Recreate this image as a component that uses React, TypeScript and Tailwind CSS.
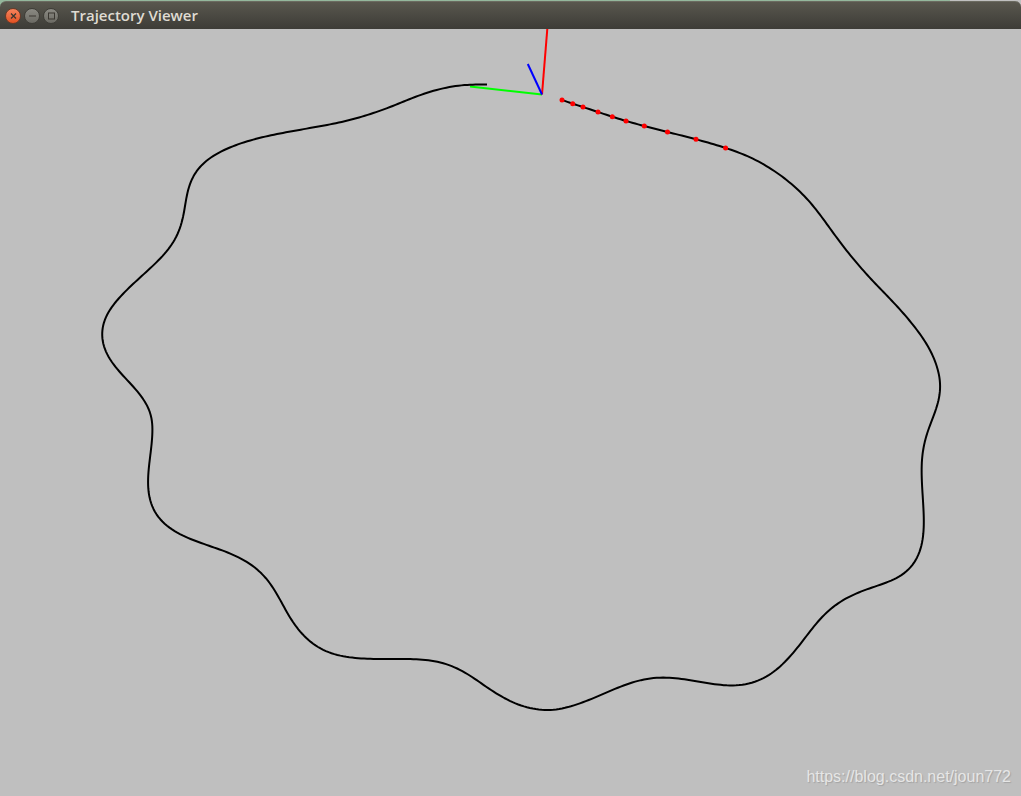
import type { ReactNode } from "react";

type Point = [number, number];

const SAMPLES: Point[] = [
  [562, 100], [572.7, 103.7], [583, 107], [598, 112], [612.3, 116.7], [626, 121], [644.3, 126], [667.5, 132],
  [696, 139.3], [725.6, 148], [750, 157.3], [771.7, 169.3], [789, 182], [808.3, 200.3], [821.7, 217],
  [833.3, 233], [846.7, 250.7], [860, 266.7], [873.3, 281.5], [890, 298.8], [903.3, 313.3], [916.7, 329.7],
  [927.7, 346], [935, 361.3], [939, 375], [940.2, 386], [938.7, 400], [934, 414.7], [928, 430.5], [924, 445],
  [921.9, 460], [921.8, 478.3], [923, 501.7], [923.8, 521], [922.5, 540], [917.3, 557.3], [908.3, 570],
  [888.3, 581.7], [866.7, 589.3], [848.3, 597.3], [833.3, 606.7], [820, 619.3], [806.7, 635.7],
  [793.3, 652.7], [780, 666.5], [766.7, 676.3], [751.7, 683], [732.7, 685.5], [711.7, 683.7], [690, 680.2],
  [670, 677.8], [660, 677.4], [646.7, 679], [626.7, 684.3], [603.3, 694], [580, 703.3], [561.7, 708.6],
  [545, 710], [526.7, 707.2], [510, 701], [493.3, 691.5], [476.7, 680.2], [460, 669.8], [443.3, 663.2],
  [428.3, 660.2], [413.3, 659.2], [380, 659], [366.7, 658.7], [346.7, 656.8], [328.3, 652.2], [313.3, 643.9],
  [300, 631.4], [290, 617.4], [280, 599.7], [271.7, 585.7], [261.7, 573.5], [246.7, 561.8], [230, 553.5],
  [211.7, 546.7], [193.3, 540], [175, 531.3], [160, 519.3], [151, 503.3], [148.1, 485], [149, 466.7],
  [151.3, 446.7], [152.3, 431.7], [151, 415], [145, 401.7], [135, 388.7], [123.3, 375.9], [111.7, 361.9],
  [105.7, 351.4], [102.8, 341], [102.2, 333.3], [104.6, 320], [111.7, 307.3], [125, 291.9], [141.7, 276],
  [158.3, 260.4], [171.7, 244.6], [180, 228.5], [184.3, 210.5], [187.3, 193.3], [192, 178.6], [200, 167],
  [213.3, 155.9], [230, 147.5], [253.3, 139.6], [280, 133.5], [306.7, 128.6], [330, 124.4], [353.3, 119.1],
  [373.3, 113], [390, 107.1], [412, 98.2], [430, 91.8], [440, 89], [453, 86.4], [467, 84.9], [487, 84.6],
];

const KEYFRAMES = SAMPLES.slice(0, 10);

const distance = (a: Point, b: Point) => Math.hypot(b[0] - a[0], b[1] - a[1]);

// Tangent at b, weighted by the distance to each neighbour.
function tangent(a: Point, b: Point, c: Point): Point {
  const before = distance(a, b) || 1;
  const after = distance(b, c) || 1;
  return [0, 1].map(
    (k) => (((b[k] - a[k]) / before) * after + ((c[k] - b[k]) / after) * before) / (before + after),
  ) as Point;
}

// Evaluates a Hermite spline through the samples about every three units.
function resample(points: Point[]): Point[] {
  const last = points.length - 1;
  const tangents = points.map((p, i) =>
    i === 0 || i === last
      ? tangent(points[Math.max(0, i - 1)], points[Math.min(Math.max(i, 1), last)], points[Math.min(i + 2, last)])
      : tangent(points[i - 1], p, points[i + 1]),
  );
  tangents[0] = tangents[1];
  tangents[last] = [1, 0];
  const out: Point[] = [];
  for (let i = 0; i < last; i++) {
    const length = distance(points[i], points[i + 1]);
    const steps = Math.max(1, Math.round(length / 3));
    for (let s = 0; s < steps; s++) {
      const t = s / steps;
      const t2 = t * t;
      const t3 = t2 * t;
      out.push(
        [0, 1].map(
          (k) =>
            (2 * t3 - 3 * t2 + 1) * points[i][k] +
            (t3 - 2 * t2 + t) * length * tangents[i][k] +
            (3 * t2 - 2 * t3) * points[i + 1][k] +
            (t3 - t2) * length * tangents[i + 1][k],
        ) as Point,
      );
    }
  }
  out.push(points[last]);
  return out;
}

// Gaussian average along the line; the window narrows towards both ends.
function average(points: Point[], sigma: number): Point[] {
  return points.map((_, i) => {
    const reach = Math.min(i, points.length - 1 - i, Math.ceil(sigma * 3));
    let x = 0;
    let y = 0;
    let total = 0;
    for (let j = -reach; j <= reach; j++) {
      const weight = Math.exp((-j * j) / (2 * sigma * sigma));
      x += points[i + j][0] * weight;
      y += points[i + j][1] * weight;
      total += weight;
    }
    return [x / total, y / total];
  });
}

// Removes sampling noise, adding back what averaging takes off the bends.
function smooth(points: Point[]): Point[] {
  const once = average(points, 4);
  const twice = average(once, 4);
  return once.map(([x, y], i) => [2 * x - twice[i][0], 2 * y - twice[i][1]]);
}

const TRAJECTORY = smooth(resample(SAMPLES))
  .map(([x, y]) => `${x.toFixed(2)},${y.toFixed(2)}`)
  .join(" ");

function WindowButton({ label, close, children }: { label: string; close?: boolean; children: ReactNode }) {
  const tone = close
    ? "border-[#6b3a28] bg-linear-to-b from-[#f7845c] to-[#e2501f]"
    : "border-[#3f3e38] bg-linear-to-b from-[#8b8a83] to-[#6b6a63]";
  return (
    <button
      type="button"
      aria-label={label}
      className={`flex size-4 items-center justify-center rounded-full border ${tone}`}
    >
      <svg viewBox="0 0 14 14" className="size-3.5 shrink-0" fill="none" stroke="#3a3731" strokeWidth="1">
        {children}
      </svg>
    </button>
  );
}

function TitleBar() {
  return (
    <header className="flex h-7 shrink-0 items-center rounded-t-md border-t border-[#6b6a60] bg-linear-to-b from-[#59574e] to-[#3d3c37] pl-[5px]">
      <div className="flex gap-[3px]">
        <WindowButton label="Close" close>
          <path d="M5 4.5l5 5M10 4.5l-5 5" strokeWidth="1.3" />
        </WindowButton>
        <WindowButton label="Minimize">
          <path d="M4 7h7" />
        </WindowButton>
        <WindowButton label="Maximize">
          <rect x="4.5" y="4" width="6" height="6" />
        </WindowButton>
      </div>
      <h1 className="ml-3 font-['Open_Sans','Noto_Sans',sans-serif] text-[15px] font-semibold text-[#dfdbd2]">
        Trajectory Viewer
      </h1>
    </header>
  );
}

export default function App() {
  return (
    <div className="flex h-screen flex-col bg-[#bfbfbf]">
      <div className="flex shrink-0 flex-col bg-linear-to-r from-[#94b79c] from-93% to-[#c0c0c0] to-93% pt-px">
        <TitleBar />
      </div>
      <main className="relative min-h-0 flex-1">
        <svg viewBox="0 29 1021 767" className="block size-full" fill="none" strokeWidth="2" role="img" aria-label="Camera trajectory">
          <path d="M542 94.5L470 86.5" stroke="#0f0" />
          <polyline points={TRAJECTORY} stroke="#000" strokeLinejoin="round" />
          <path d="M542 94.5L547.3 29" stroke="#f00" />
          <path d="M542 94.5L527.8 64" stroke="#00f" />
          {KEYFRAMES.map(([x, y]) => (
            <circle key={x} cx={x} cy={y} r="2.5" fill="#f00" />
          ))}
        </svg>
        <a
          href="https://blog.csdn.net/joun772"
          className="absolute right-2.5 bottom-[7px] font-['Liberation_Sans',Arial,sans-serif] text-base text-[#e6e6e6] [text-shadow:1px_1px_1px_#a3a3a3]"
        >
          https://blog.csdn.net/joun772
        </a>
      </main>
    </div>
  );
}
